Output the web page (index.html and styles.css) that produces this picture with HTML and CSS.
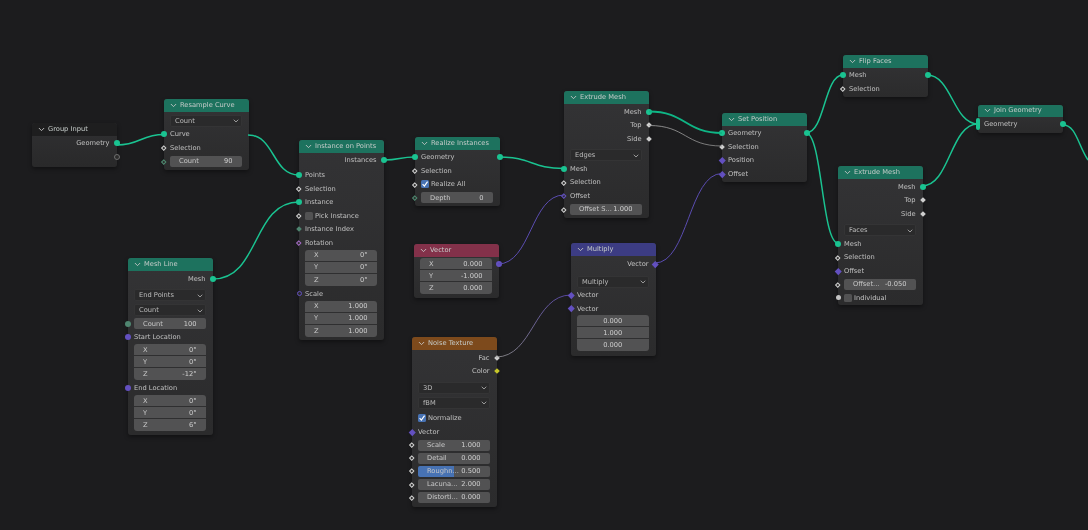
FILE: index.html
```html
<!DOCTYPE html>
<html lang="en">
<head>
<meta charset="utf-8">
<title>Geometry Nodes</title>
<link rel="stylesheet" href="styles.css">
</head>
<body>
<svg class="defs" width="0" height="0" aria-hidden="true">
  <symbol id="chev" viewBox="0 0 8 5"><path d="M1 .8 4 3.8 7 .8" fill="none" stroke="currentColor" stroke-width="1"/></symbol>
  <symbol id="tick" viewBox="0 0 10 10"><path d="M2 5.2 4.2 7.6 8.2 2" fill="none" stroke="#fff" stroke-width="1.5"/></symbol>
  <linearGradient id="gw" gradientUnits="userSpaceOnUse" x1="649" x2="722" y1="125" y2="146"><stop offset="0" stop-color="#a8a8a8"/><stop offset="1" stop-color="#8c8c8c"/></linearGradient>
  <linearGradient id="gp" gradientUnits="userSpaceOnUse" x1="496" x2="571" y1="357" y2="295"><stop offset="0" stop-color="#989898"/><stop offset="1" stop-color="#6550c0"/></linearGradient>
</svg>
<main class="canvas">
  <svg class="links" width="1088" height="530" viewBox="0 0 1088 530" aria-hidden="true">
    <g class="geo">
      <path d="M117 145C140 145 141 134.500 164 134.500"/>
      <path d="M248 135C275 135 272 175 299 175"/>
      <path d="M213 279C260 279 252 202 299 202"/>
      <path d="M384 160C400 160 399 157 415 157"/>
      <path d="M499 157C532 157 531 168.500 564 168.500"/>
      <path class="thick" d="M649 111.500C686 111.500 685 133 722 133"/>
      <path d="M806 133C825 133 824 75 843 75"/>
      <path d="M806 133C822 133 822 243 838 243"/>
      <path d="M927 75C952 75 953 124 978 124"/>
      <path d="M922 186C950 186 950 124 978 124"/>
      <path d="M1063 125C1076 125 1078 145 1088 160"/>
    </g>
    <path class="white" d="M649 125.500C686 125.500 685 146 722 146"/>
    <g class="vec-link">
      <path d="M498 264C531 264 531 195 564 195"/>
      <path d="M655 263C688 263 689 173.500 722 173.500"/>
    </g>
    <path class="mix" d="M496 357C533 357 534 295 571 295"/>
  </svg>

  <section class="node n-group">
    <h2 class="head dark"><svg class="chev"><use href="#chev"/></svg>Group Input</h2>
    <div class="body pad-half">
      <div class="row out">Geometry<i class="sock r s-geo"></i></div>
      <div class="row out"><i class="sock r s-empty"></i></div>
    </div>
  </section>

  <section class="node n-resample">
    <h2 class="head green"><svg class="chev"><use href="#chev"/></svg>Resample Curve</h2>
    <div class="body pad2">
      <div class="row"><div class="dd">Count<svg class="chev"><use href="#chev"/></svg></div></div>
      <div class="row"><i class="sock l s-geo"></i>Curve</div>
      <div class="row"><i class="sock l s-hollow"></i>Selection</div>
      <div class="row"><i class="sock l s-int"></i><div class="f"><span>Count</span><b>90</b></div></div>
    </div>
  </section>

  <section class="node n-mesh">
    <h2 class="head green"><svg class="chev"><use href="#chev"/></svg>Mesh Line</h2>
    <div class="body pad1">
      <div class="row out">Mesh<i class="sock r s-geo"></i></div>
      <div class="row mt3"><div class="dd">End Points<svg class="chev"><use href="#chev"/></svg></div></div>
      <div class="row mt1"><div class="dd">Count<svg class="chev"><use href="#chev"/></svg></div></div>
      <div class="row"><i class="sock l s-intc"></i><div class="f"><span>Count</span><b>100</b></div></div>
      <div class="row"><i class="sock l s-vecc"></i>Start Location</div>
      <div class="vec">
        <div class="f"><span>X</span><b>0°</b></div>
        <div class="f"><span>Y</span><b>0°</b></div>
        <div class="f"><span>Z</span><b>-12°</b></div>
      </div>
      <div class="row mt1"><i class="sock l s-vecc"></i>End Location</div>
      <div class="vec">
        <div class="f"><span>X</span><b>0°</b></div>
        <div class="f"><span>Y</span><b>0°</b></div>
        <div class="f"><span>Z</span><b>6°</b></div>
      </div>
    </div>
  </section>

  <section class="node n-iop">
    <h2 class="head green"><svg class="chev"><use href="#chev"/></svg>Instance on Points</h2>
    <div class="body pad-half">
      <div class="row out">Instances<i class="sock r s-geo"></i></div>
      <div class="row mt1"><i class="sock l s-geo"></i>Points</div>
      <div class="row"><i class="sock l s-hollow"></i>Selection</div>
      <div class="row"><i class="sock l s-geo"></i>Instance</div>
      <div class="row"><i class="sock l s-hollow"></i><span class="cb"></span>Pick Instance</div>
      <div class="row"><i class="sock l s-intd"></i>Instance Index</div>
      <div class="row"><i class="sock l s-rot"></i>Rotation</div>
      <div class="vec">
        <div class="f"><span>X</span><b>0°</b></div>
        <div class="f"><span>Y</span><b>0°</b></div>
        <div class="f"><span>Z</span><b>0°</b></div>
      </div>
      <div class="row mt1"><i class="sock l s-vech"></i>Scale</div>
      <div class="vec">
        <div class="f"><span>X</span><b>1.000</b></div>
        <div class="f"><span>Y</span><b>1.000</b></div>
        <div class="f"><span>Z</span><b>1.000</b></div>
      </div>
    </div>
  </section>

  <section class="node n-realize">
    <h2 class="head green"><svg class="chev"><use href="#chev"/></svg>Realize Instances</h2>
    <div class="body pad-half">
      <div class="row"><i class="sock l s-geo"></i>Geometry<i class="sock r s-geo"></i></div>
      <div class="row"><i class="sock l s-hollow"></i>Selection</div>
      <div class="row"><i class="sock l s-hollow"></i><span class="cb on"><svg><use href="#tick"/></svg></span>Realize All</div>
      <div class="row"><i class="sock l s-int"></i><div class="f"><span>Depth</span><b>0</b></div></div>
    </div>
  </section>

  <section class="node n-vector">
    <h2 class="head pink"><svg class="chev"><use href="#chev"/></svg>Vector</h2>
    <div class="body pad1">
      <div class="vec">
        <div class="f"><span>X</span><b>0.000</b><i class="sock fr s-vecc"></i></div>
        <div class="f"><span>Y</span><b>-1.000</b></div>
        <div class="f"><span>Z</span><b>0.000</b></div>
      </div>
    </div>
  </section>

  <section class="node n-noise">
    <h2 class="head orange"><svg class="chev"><use href="#chev"/></svg>Noise Texture</h2>
    <div class="body pad1">
      <div class="row out">Fac<i class="sock r s-white"></i></div>
      <div class="row out">Color<i class="sock r s-yellow"></i></div>
      <div class="row mt3"><div class="dd">3D<svg class="chev"><use href="#chev"/></svg></div></div>
      <div class="row mt1"><div class="dd">fBM<svg class="chev"><use href="#chev"/></svg></div></div>
      <div class="row mt2"><span class="cb on"><svg><use href="#tick"/></svg></span>Normalize</div>
      <div class="row"><i class="sock l s-vecd"></i>Vector</div>
      <div class="row tight"><i class="sock l s-hollow"></i><div class="f"><span>Scale</span><b>1.000</b></div></div>
      <div class="row tight"><i class="sock l s-hollow"></i><div class="f"><span>Detail</span><b>0.000</b></div></div>
      <div class="row tight"><i class="sock l s-hollow"></i><div class="f slider"><span>Roughn...</span><b>0.500</b></div></div>
      <div class="row tight"><i class="sock l s-hollow"></i><div class="f"><span>Lacuna...</span><b>2.000</b></div></div>
      <div class="row tight"><i class="sock l s-hollow"></i><div class="f"><span>Distorti...</span><b>0.000</b></div></div>
    </div>
  </section>

  <section class="node n-extrude">
    <h2 class="head green"><svg class="chev"><use href="#chev"/></svg>Extrude Mesh</h2>
    <div class="body pad1">
      <div class="row out">Mesh<i class="sock r s-geo"></i></div>
      <div class="row out">Top<i class="sock r s-white"></i></div>
      <div class="row out">Side<i class="sock r s-white"></i></div>
      <div class="row mt3"><div class="dd">Edges<svg class="chev"><use href="#chev"/></svg></div></div>
      <div class="row"><i class="sock l s-geo"></i>Mesh</div>
      <div class="row"><i class="sock l s-hollow"></i>Selection</div>
      <div class="row"><i class="sock l s-rotv"></i>Offset</div>
      <div class="row"><i class="sock l s-hollow"></i><div class="f"><span>Offset S...</span><b>1.000</b></div></div>
    </div>
  </section>

  <section class="node n-multiply">
    <h2 class="head blue"><svg class="chev"><use href="#chev"/></svg>Multiply</h2>
    <div class="body pad1">
      <div class="row out">Vector<i class="sock r s-vecd"></i></div>
      <div class="row mt4"><div class="dd">Multiply<svg class="chev"><use href="#chev"/></svg></div></div>
      <div class="row"><i class="sock l s-vecd"></i>Vector</div>
      <div class="row"><i class="sock l s-vecd"></i>Vector</div>
      <div class="vec">
        <div class="f center"><b>0.000</b></div>
        <div class="f center"><b>1.000</b></div>
        <div class="f center"><b>0.000</b></div>
      </div>
    </div>
  </section>

  <section class="node n-setpos">
    <h2 class="head green"><svg class="chev"><use href="#chev"/></svg>Set Position</h2>
    <div class="body pad-half">
      <div class="row"><i class="sock l s-geo"></i>Geometry<i class="sock r s-geo"></i></div>
      <div class="row"><i class="sock l s-white"></i>Selection</div>
      <div class="row"><i class="sock l s-vecd"></i>Position</div>
      <div class="row"><i class="sock l s-vecd"></i>Offset</div>
    </div>
  </section>

  <section class="node n-flip">
    <h2 class="head green"><svg class="chev"><use href="#chev"/></svg>Flip Faces</h2>
    <div class="body pad-half">
      <div class="row"><i class="sock l s-geo"></i>Mesh<i class="sock r s-geo"></i></div>
      <div class="row"><i class="sock l s-hollow"></i>Selection</div>
    </div>
  </section>

  <section class="node n-join">
    <h2 class="head green"><svg class="chev"><use href="#chev"/></svg>Join Geometry</h2>
    <div class="body pad-half">
      <div class="row"><i class="sock l s-multi"></i>Geometry<i class="sock r s-geo"></i></div>
    </div>
  </section>

  <section class="node n-extrude2">
    <h2 class="head green"><svg class="chev"><use href="#chev"/></svg>Extrude Mesh</h2>
    <div class="body pad1">
      <div class="row out">Mesh<i class="sock r s-geo"></i></div>
      <div class="row out">Top<i class="sock r s-white"></i></div>
      <div class="row out">Side<i class="sock r s-white"></i></div>
      <div class="row mt3"><div class="dd">Faces<svg class="chev"><use href="#chev"/></svg></div></div>
      <div class="row"><i class="sock l s-geo"></i>Mesh</div>
      <div class="row"><i class="sock l s-hollow"></i>Selection</div>
      <div class="row"><i class="sock l s-vecd"></i>Offset</div>
      <div class="row"><i class="sock l s-hollow"></i><div class="f"><span>Offset...</span><b>-0.050</b></div></div>
      <div class="row"><i class="sock l s-bool"></i><span class="cb"></span>Individual</div>
    </div>
  </section>
</main>
</body>
</html>
```
FILE: styles.css
```css
* { box-sizing: border-box; }
html, body { margin: 0; height: 100%; background: #1c1c1e; overflow: hidden; }
.defs { position: absolute; }
.canvas {
  position: relative;
  width: 1088px;
  height: 530px;
  background: #1c1c1e;
  font: 6.7px/1 "DejaVu Sans", sans-serif;
  color: #c0c0c0;
  filter: blur(.35px);
}
.links { position: absolute; inset: 0; z-index: 2; fill: none; pointer-events: none; }
.geo path { stroke: #1ac391; stroke-width: 1.5; }
.geo .thick { stroke: #0fb585; stroke-width: 2; }
.white { stroke: url(#gw); stroke-width: .8; }
.vec-link path { stroke: #5a4cb0; stroke-width: 1; }
.mix { stroke: url(#gp); stroke-width: .8; }

.node {
  position: absolute;
  border-radius: 3px;
  background: linear-gradient(#333335, #2b2b2c);
  box-shadow: 0 2px 4px rgba(0, 0, 0, .4);
  width: 84.5px;
  z-index: 1;
}
.head {
  margin: 0;
  height: 13px;
  display: flex;
  align-items: center;
  gap: 3px;
  padding: 0 0 .5px 6px;
  font: inherit;
  color: #c6ccca;
  border-radius: 3px 3px 0 0;
}
.head .chev { width: 7px; height: 5px; color: #c8c8c8; flex: none; }
.dark { background: #1e1e1f; }
.green { background: #1d725e; }
.pink { background: #83314a; }
.orange { background: #7d4a1c; }
.blue { background: #3c3c83; }

.n-group { left: 32px; top: 123px; height: 44px; background: linear-gradient(#303032, #29292a); }
.n-resample { left: 164px; top: 99px; height: 71px; }
.n-mesh { left: 128px; top: 258px; height: 177px; }
.n-iop { left: 299px; top: 140px; height: 200px; }
.n-realize { left: 415px; top: 137px; height: 69px; }
.n-vector { left: 414px; top: 244px; height: 54px; }
.n-noise { left: 412px; top: 337px; height: 170px; }
.n-extrude { left: 564px; top: 91px; height: 127px; }
.n-multiply { left: 571px; top: 243px; height: 113px; }
.n-setpos { left: 722px; top: 113px; height: 69px; }
.n-flip { left: 843px; top: 55px; height: 42px; }
.n-join { left: 978px; top: 105px; height: 28px; }
.n-extrude2 { left: 838px; top: 166px; height: 139px; }
.n-join .head { height: 12px; }

.body { position: relative; display: flex; flex-direction: column; }
.pad2 { padding-top: 2px; }
.pad1 { padding-top: 1px; }
.pad-half { padding-top: .5px; }
.mt1 { margin-top: 1.5px; }
.mt2 { margin-top: 2px; }
.mt3 { margin-top: 3px; }
.mt4 { margin-top: 4.25px; }

.row {
  position: relative;
  flex: none;
  height: 13.5px;
  display: flex;
  align-items: center;
  padding: .8px 7px 0 6px;
  white-space: nowrap;
}
.out { justify-content: flex-end; }
.tight { height: 13.1px; }
.row > .f, .row > .dd { margin-top: -.8px; }

.dd {
  width: 100%;
  height: 12px;
  display: flex;
  align-items: center;
  justify-content: space-between;
  padding: .8px 2px 0 4px;
  background: #2a2a2b;
  border: 1px solid #343435;
  border-radius: 2px;
  color: #bcbcbc;
}
.dd .chev { width: 6px; height: 4px; color: #c4c4c4; flex: none; }

.f {
  position: relative;
  width: 100%;
  height: 11px;
  display: flex;
  align-items: center;
  justify-content: space-between;
  padding: .8px 9px 0;
  background: #525253;
  border-radius: 2px;
  color: #c8c8c8;
}
.f b { font-weight: 400; color: #d0d0d0; }
.center { justify-content: center; }
.slider { background: linear-gradient(90deg, #4772b3 0 50%, #525253 50%); }

.vec {
  flex: none;
  display: flex;
  flex-direction: column;
  margin: 0 7px 0 6px;
  border-radius: 3px;
  background: #2a2a2b;
}
.vec .f { height: 12px; border-bottom: 1px solid #2f2f30; border-radius: 0; }
.vec .f:first-child { border-radius: 3px 3px 0 0; }
.vec .f:last-child { border-radius: 0 0 3px 3px; border-bottom: 0; }

.cb {
  flex: none;
  width: 8px;
  height: 8px;
  margin: -.8px 2px 0 0;
  border-radius: 1.5px;
  background: #525253;
}
.cb.on { background: #4772b3; }
.cb svg { display: block; width: 8px; height: 8px; }

.sock {
  position: absolute;
  top: 50%;
  width: 6px;
  height: 6px;
  margin-top: -3px;
  z-index: 3;
  border-radius: 50%;
}
.l { left: -3px; }
.r { right: -3px; }
.fr { right: -10px; }

.s-geo { background: #1ac391; }
.s-empty { background: #2c2c2c; border: 1px solid #6e6e6e; }
.s-int { width: 3.5px; height: 3.5px; margin: -1.75px 0 0 1.25px; border: 1px solid #4d8a70; border-radius: 0; transform: rotate(45deg); background: #2c2c2c; }
.s-intc { background: #4f8570; }
.s-intd { width: 4px; height: 4px; margin: -2px 0 0 1px; background: #4f8570; border-radius: 0; transform: rotate(45deg); }
.s-hollow { width: 3.5px; height: 3.5px; margin: -1.75px 0 0 1.25px; background: #2c2c2c; border: 1px solid #d0d0d0; border-radius: 0; transform: rotate(45deg); }
.s-white { width: 4px; height: 4px; margin: -2px 1px 0 1px; background: #cfcfcf; border-radius: 0; transform: rotate(45deg); }
.s-yellow { width: 4px; height: 4px; margin: -2px 1px 0 1px; background: #c7c729; border-radius: 0; transform: rotate(45deg); }
.s-vecc { background: #6350c0; }
.s-vech { width: 5px; height: 5px; margin: -2.500px 0 0 .5px; background: #2c2c2c; border: 1.200px solid #6350c0; border-radius: 50%; }
.s-vecd { width: 4.500px; height: 4.500px; margin: -2.250px .75px 0 .75px; background: #6350c0; border-radius: 0; transform: rotate(45deg); }
.s-rot { width: 3.5px; height: 3.5px; margin: -1.75px 0 0 1.25px; background: #2c2c2c; border: 1px solid #a36ac4; border-radius: 0; transform: rotate(45deg); }
.s-rotv { width: 3.5px; height: 3.5px; margin: -1.75px 0 0 1.25px; background: #2c2c2c; border: 1px solid #6350c0; border-radius: 0; transform: rotate(45deg); }
.s-bool { width: 5px; height: 5px; margin: -2.500px 0 0 .5px; background: #c4c4c4; }
.s-multi { width: 4px; height: 12px; margin-top: -6px; left: -2px; border-radius: 2px; background: #1ac391; }
```
